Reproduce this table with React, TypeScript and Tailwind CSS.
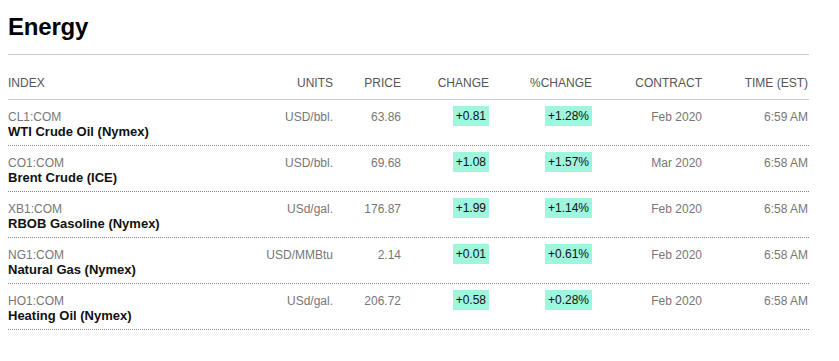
import React from "react";

type Row = {
  code: string;
  name: string;
  units: string;
  price: string;
  change: string;
  pct: string;
  contract: string;
  time: string;
};

const rows: Row[] = [
  { code: "CL1:COM", name: "WTI Crude Oil (Nymex)", units: "USD/bbl.", price: "63.86", change: "+0.81", pct: "+1.28%", contract: "Feb 2020", time: "6:59 AM" },
  { code: "CO1:COM", name: "Brent Crude (ICE)", units: "USD/bbl.", price: "69.68", change: "+1.08", pct: "+1.57%", contract: "Mar 2020", time: "6:58 AM" },
  { code: "XB1:COM", name: "RBOB Gasoline (Nymex)", units: "USd/gal.", price: "176.87", change: "+1.99", pct: "+1.14%", contract: "Feb 2020", time: "6:58 AM" },
  { code: "NG1:COM", name: "Natural Gas (Nymex)", units: "USD/MMBtu", price: "2.14", change: "+0.01", pct: "+0.61%", contract: "Feb 2020", time: "6:58 AM" },
  { code: "HO1:COM", name: "Heating Oil (Nymex)", units: "USd/gal.", price: "206.72", change: "+0.58", pct: "+0.28%", contract: "Feb 2020", time: "6:58 AM" },
];

const cols = "grid grid-cols-[252px_73px_68px_88px_103px_110px_106px]";

const App = () => {
  return (
    <div className="min-h-[361px] w-[839px] bg-white pl-2 font-['Liberation_Sans',Arial,sans-serif]">
      {/* TITLE */}
      <h1 className="pt-[12px] text-[24px] font-bold leading-[30px] tracking-[-0.2px] text-black">Energy</h1>
      <div className="w-[801px]">
        {/* HEADER */}
        <div className={`${cols} mt-[12px] h-[46px] border-t border-b border-[#cccccc] pt-[21px] text-[12px] leading-[14px] text-[#555555]`}>
          <div>INDEX</div>
          <div className="text-right">UNITS</div>
          <div className="text-right">PRICE</div>
          <div className="text-right">CHANGE</div>
          <div className="text-right">%CHANGE</div>
          <div className="text-right">CONTRACT</div>
          <div className="text-right">TIME (EST)</div>
        </div>
        {/* ROWS */}
        {rows.map((r) => (
          <div
            key={r.code}
            className={`${cols} h-[46px] border-b border-dotted border-[#888888] text-[12px] text-[#777777]`}
          >
            <div className="pt-[10px]">
              <div className="leading-[14px] text-[#777777]">{r.code}</div>
              <div className="text-[13px] font-bold leading-[15px] text-[#111111]">{r.name}</div>
            </div>
            <div className="pt-[10px] text-right leading-[14px]">{r.units}</div>
            <div className="pt-[10px] text-right leading-[14px]">{r.price}</div>
            <div className="flex justify-end pt-[6px]">
              <span className="h-[20px] bg-[#9ff5dd] px-[3px] leading-[20px] text-[#111111]">{r.change}</span>
            </div>
            <div className="flex justify-end pt-[6px]">
              <span className="h-[20px] bg-[#9ff5dd] px-[3px] leading-[20px] text-[#111111]">{r.pct}</span>
            </div>
            <div className="pt-[10px] text-right leading-[14px]">{r.contract}</div>
            <div className="pt-[10px] text-right leading-[14px]">{r.time}</div>
          </div>
        ))}
      </div>
    </div>
  );
};

export default App;
